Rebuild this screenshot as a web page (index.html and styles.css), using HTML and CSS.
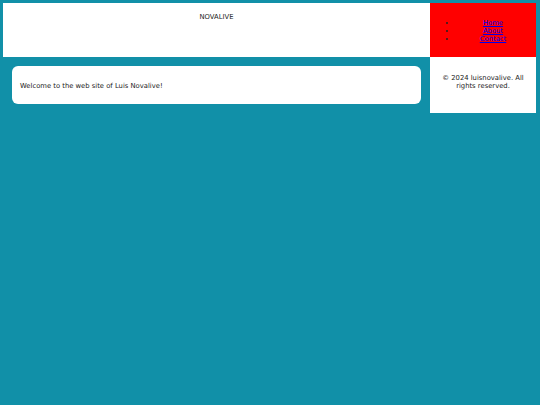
FILE: index.html
```html
<!DOCTYPE html>
<html lang="en">
<head>
<meta charset="utf-8">
<title>Novalive</title>
<link rel="stylesheet" href="styles.css">
</head>
<body>
<div class="page">
  <header class="site-header">NOVALIVE</header>
  <nav class="site-nav">
    <ul>
      <li><a href="#">Home</a></li>
      <li><a href="#">About</a></li>
      <li><a href="#">Contact</a></li>
    </ul>
  </nav>
  <main class="site-main">
    <div class="card">
      <p>Welcome to the web site of Luis Novalive!</p>
    </div>
  </main>
  <footer class="site-footer">
    <p>© 2024 luisnovalive. All rights reserved.</p>
  </footer>
</div>
</body>
</html>
```

FILE: styles.css
```css
html, body {
  margin: 0;
  padding: 0;
}
body {
  background: #1190a8;
  font-family: "DejaVu Sans", Verdana, sans-serif;
  font-size: 6.8px;
  color: #222;
  height: 405px;
}
.page {
  display: grid;
  grid-template-columns: 1fr 106px;
  grid-template-rows: 54px auto;
  padding: 3px 4px 0 3px;
}
.site-header {
  background: #fff;
  text-align: center;
  padding-top: 10px;
  line-height: 8px;
}
.site-nav {
  background: #ff0000;
  padding: 9px 0 7px;
}
.site-nav ul {
  margin: 7px 0;
  padding: 0 7px 0 27px;
  line-height: 8px;
  text-align: center;
}
.site-nav a {
  color: #0000ee;
}
.site-main {
  padding: 9px;
}
.card {
  background: #fff;
  border-radius: 6px;
  padding: 9px 8px 7px;
  line-height: 8px;
}
.card p {
  margin: 7px 0;
}
.site-footer {
  background: #fff;
  padding: 10px 8px 8px;
  text-align: center;
  line-height: 8px;
}
.site-footer p {
  margin: 7px 0;
}
```
